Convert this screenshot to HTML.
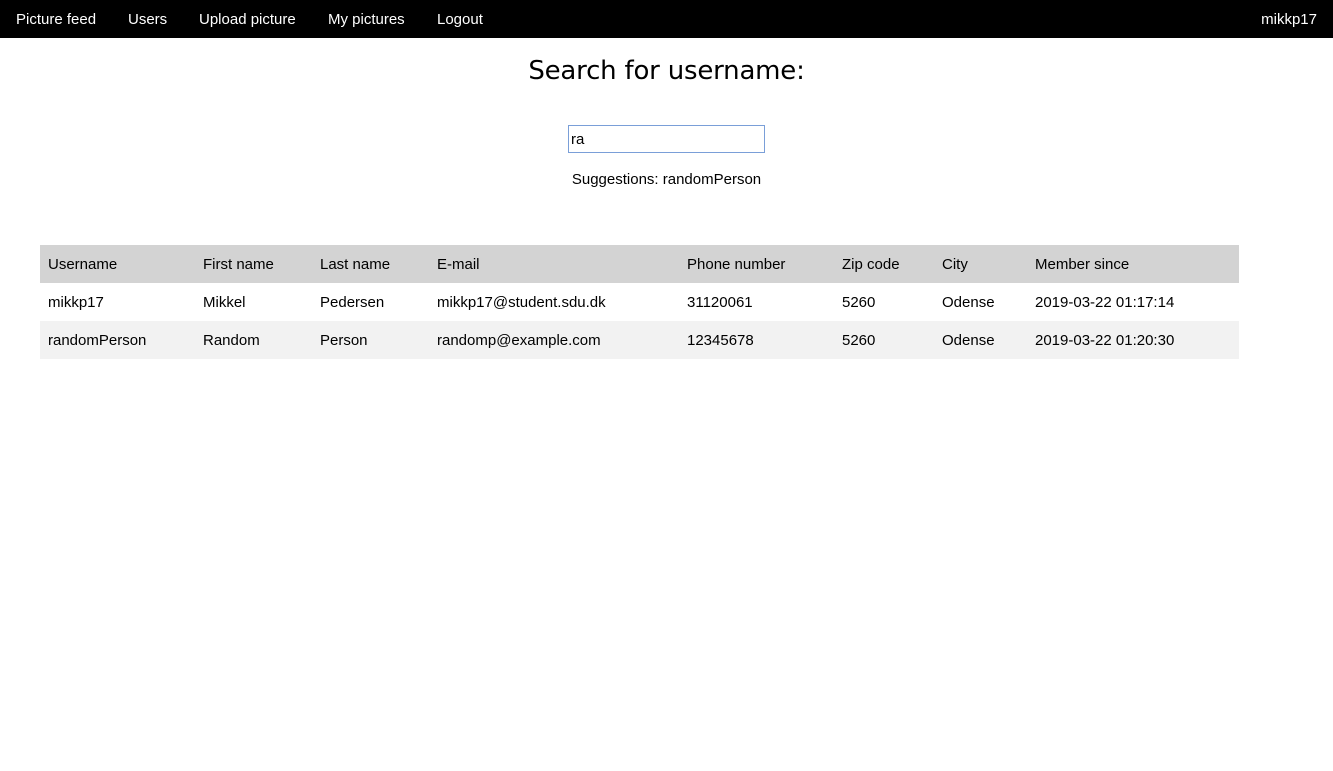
<!DOCTYPE html>
<html><head><meta charset="utf-8"><style>
body{margin:0;font-family:"Liberation Sans",Arial,sans-serif;background:#fff;color:#000;}
.nav{height:38px;background:#000;position:relative;color:#fff;font-size:15px;}
.nav span{position:absolute;top:11px;}
h1{margin:0;position:absolute;top:56px;left:0;width:1333px;text-align:center;font-family:"DejaVu Sans",sans-serif;font-weight:normal;font-size:26px;letter-spacing:-0.2px;}
.inp{position:absolute;left:568px;top:125px;width:197px;height:28px;border:1px solid #7a9fd8;box-sizing:border-box;font-size:15px;padding:5px 2px;}
.sug{position:absolute;top:171px;left:0;width:1333px;text-align:center;font-size:15px;}
table{position:absolute;left:40px;top:245px;width:1199px;border-collapse:collapse;font-size:15px;}
td,th{height:38px;padding:0 0 0 8px;text-align:left;font-weight:normal;}
th{background:#d3d3d3;}
tr.g td{background:#f2f2f2;}
</style></head><body>
<div class="nav">
<span style="left:16px">Picture feed</span>
<span style="left:128px">Users</span>
<span style="left:199px">Upload picture</span>
<span style="left:328px">My pictures</span>
<span style="left:437px">Logout</span>
<span style="right:16px">mikkp17</span>
</div>
<h1>Search for username:</h1>
<div class="inp">ra</div>
<div class="sug">Suggestions: randomPerson</div>
<table>
<colgroup><col style="width:155px"><col style="width:117px"><col style="width:117px"><col style="width:250px"><col style="width:155px"><col style="width:100px"><col style="width:93px"><col></colgroup>
<tr><th>Username</th><th>First name</th><th>Last name</th><th>E-mail</th><th>Phone number</th><th>Zip code</th><th>City</th><th>Member since</th></tr>
<tr><td>mikkp17</td><td>Mikkel</td><td>Pedersen</td><td>mikkp17@student.sdu.dk</td><td>31120061</td><td>5260</td><td>Odense</td><td>2019-03-22 01:17:14</td></tr>
<tr class="g"><td>randomPerson</td><td>Random</td><td>Person</td><td>randomp@example.com</td><td>12345678</td><td>5260</td><td>Odense</td><td>2019-03-22 01:20:30</td></tr>
</table>
</body></html>
